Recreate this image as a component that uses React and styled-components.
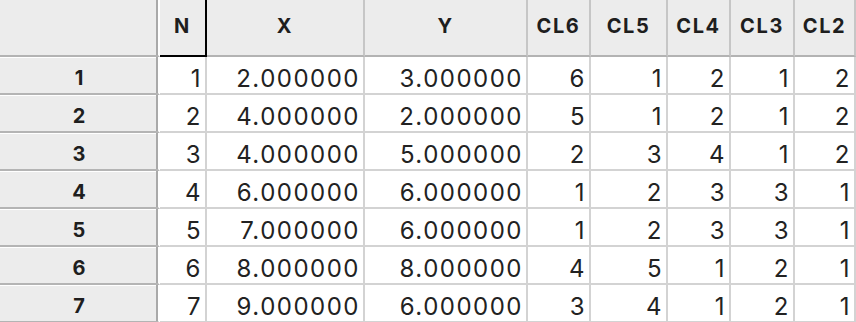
import React from "react";
import styled, { createGlobalStyle } from "styled-components";

const columns = ["N", "X", "Y", "CL6", "CL5", "CL4", "CL3", "CL2"];

const rows = [
  [1, "2.000000", "3.000000", 6, 1, 2, 1, 2],
  [2, "4.000000", "2.000000", 5, 1, 2, 1, 2],
  [3, "4.000000", "5.000000", 2, 3, 4, 1, 2],
  [4, "6.000000", "6.000000", 1, 2, 3, 3, 1],
  [5, "7.000000", "6.000000", 1, 2, 3, 3, 1],
  [6, "8.000000", "8.000000", 4, 5, 1, 2, 1],
  [7, "9.000000", "6.000000", 3, 4, 1, 2, 1]
];

const App = () => {
  return (
    <Sheet>
      <GlobalStyle />
      <Corner />
      {columns.map((name, i) => (
        <ColHead key={name} selected={i === 0}>
          {name}
        </ColHead>
      ))}
      {rows.map((row, r) => (
        <React.Fragment key={r}>
          <RowHead>{r + 1}</RowHead>
          {row.map((value, c) => (
            <Cell key={c}>{value}</Cell>
          ))}
        </React.Fragment>
      ))}
    </Sheet>
  );
};

export default App;

const GlobalStyle = createGlobalStyle`
  * {
    box-sizing: border-box;
  }
  body {
    margin: 0;
    overflow: hidden;
    background: #fff;
    font-family: Inter, "Liberation Sans", sans-serif;
  }
`;

const Sheet = styled.div`
  display: grid;
  grid-template-columns: 160px 47px 158px 163px 63px 77px 63px 64px 61px;
  grid-template-rows: 57px repeat(7, 38px);
  width: 856px;
  background: #fff;
`;

const Corner = styled.div`
  background: #ececec;
  border-right: 2px solid #fff;
  border-bottom: 2px solid #b3b3b3;
  box-shadow: inset -2px 0 #a9a9a9;
`;

const ColHead = styled.div`
  display: flex;
  align-items: center;
  justify-content: center;
  padding-bottom: 4px;
  background: #ececec;
  color: #1e1e1e;
  font-size: 20px;
  font-weight: 700;
  letter-spacing: 1.6px;
  border-right: 2px solid ${(p) => (p.selected ? "#000" : "#c6c6c6")};
  border-bottom: 2px solid ${(p) => (p.selected ? "#000" : "#b3b3b3")};
`;

const RowHead = styled.div`
  display: flex;
  align-items: center;
  justify-content: center;
  padding-top: 6px;
  background: #ececec;
  color: #1e1e1e;
  font-size: 20px;
  font-weight: 700;
  border-right: 2px solid #fff;
  border-bottom: 2px solid #b4b4b4;
  box-shadow: inset -2px 0 #a9a9a9, inset 0 1px #fff;
`;

const Cell = styled.div`
  display: flex;
  align-items: center;
  justify-content: flex-end;
  padding: 6px 3px 0 0;
  color: #222;
  font-size: 24px;
  letter-spacing: 1.5px;
  border-right: 2px solid #d3d3d3;
  border-bottom: 2px solid #d3d3d3;
`;
